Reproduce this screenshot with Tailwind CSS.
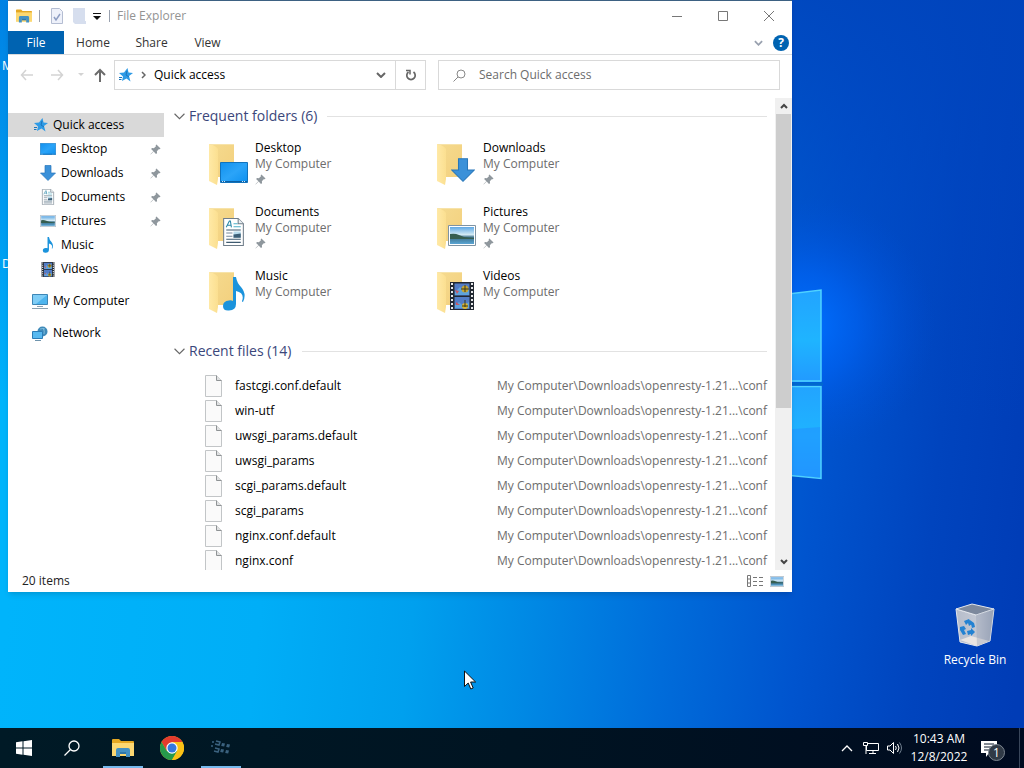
<!DOCTYPE html>
<html lang="en">
<head>
    <meta charset="UTF-8">
    <meta name="viewport" content="width=device-width, initial-scale=1.0">
    <title>File Explorer</title>
    <script src="https://cdn.jsdelivr.net/npm/@tailwindcss/browser@4"></script>
</head>
<body class="relative flex flex-col min-h-screen overflow-hidden bg-[#0048c4] font-['Open_Sans',sans-serif] text-xs text-black">

    <!-- Icon sprite -->
    <svg class="absolute w-0 h-0" aria-hidden="true">
        <defs>
            <linearGradient id="folderFront" x1="0" y1="0" x2="1" y2="0">
                <stop offset="0" stop-color="#ffe9a6"/><stop offset="1" stop-color="#fbdf90"/>
            </linearGradient>
            <linearGradient id="folderBack" x1="0" y1="0" x2="1" y2="1">
                <stop offset="0" stop-color="#f5da8e"/><stop offset="1" stop-color="#f3d07e"/>
            </linearGradient>
            <linearGradient id="screenBlue" x1="0" y1="0" x2="1" y2="1">
                <stop offset="0" stop-color="#1190ee"/><stop offset=".5" stop-color="#2ba4f8"/><stop offset="1" stop-color="#0c90f0"/>
            </linearGradient>
            <linearGradient id="photoSky" x1="0" y1="0" x2="0" y2="1">
                <stop offset="0" stop-color="#5fa8e4"/><stop offset=".45" stop-color="#d4ebf5"/><stop offset=".6" stop-color="#3d7089"/><stop offset="1" stop-color="#5aa5d4"/>
            </linearGradient>
            <linearGradient id="binSide" x1="0" y1="0" x2="1" y2="0">
                <stop offset="0" stop-color="#b6bdcb"/><stop offset=".6" stop-color="#c4c9d4"/><stop offset="1" stop-color="#9ea8bb"/>
            </linearGradient>
        </defs>
        <symbol id="explorer" viewBox="0 0 22 18">
            <path d="M0 1q0-1 1-1h6l2 2h12q1 0 1 1v3H0z" fill="#e5a823"/>
            <path d="M0 4h22v13H0z" fill="#fcd872"/>
            <path d="M4 18v-7q0-2 2-2h10q2 0 2 2v7h-4v-5H8v5z" fill="#4491c4"/>
            <path d="M8 13h6v2H8z" fill="#2f78ab"/>
        </symbol>
        <symbol id="star" viewBox="0 0 14 14">
            <path d="M8.500 0l1 4.500 4.500.5-4 3 1.500 5.500L7.500 10.500 3 13l1-4.500L0 5l5-.5z" fill="#2f9be6"/>
            <path d="M0 9.500h3M0 11.500h2.500M8 3l-1 4 3 2" stroke="#1b74bb" fill="none"/>
        </symbol>
        <symbol id="pin" viewBox="0 0 12 12">
            <path d="M7 0.500L11.500 5l-1 .8-1-.2L7.500 8l.2 2L6.500 11 4 8.300 1 11.300.500 11.500.700 11 3.700 8 1.200 5.500l1-1.200 2 .2L6.500 2.500 6.200 1.300z" fill="#8f979d"/>
        </symbol>
        <symbol id="desktop" viewBox="0 0 28 21">
            <path d="M.5.500h27v20H.500z" fill="url(#screenBlue)" stroke="#1173bd"/>
            <path d="M1 19.500h26" stroke="#0b5fa3"/>
            <path d="M2 19.500h4M22 19.500h4" stroke="#cfe9fb" stroke-dasharray="1 1"/>
        </symbol>
        <symbol id="downarrow" viewBox="0 0 16 16">
            <path d="M5 .5h6V8h4.500L8 15.500.500 8H5z" fill="#3b91d9" stroke="#2877ba" stroke-width=".7"/>
        </symbol>
        <symbol id="document" viewBox="0 0 20 27">
            <path d="M.5.500h14l5 5v21H.500z" fill="#fff" stroke="#6f7d89"/>
            <path d="M14.500.500v5h5" fill="#e8eef2" stroke="#6f7d89"/>
            <path d="M3 9L6 3h1l1 6M4.500 7H8" stroke="#2a87a8" fill="none"/>
            <path d="M10 5.500h4M10 8.500h7" stroke="#4cb1c9"/>
            <path d="M3 11.500h14M3 20.500h14M3 23.500h14" stroke="#3f5b70"/>
            <path d="M3 14.500h6M3 17.500h6" stroke="#75889a"/>
            <path d="M10 13h7v6h-7z" fill="#b8dced"/><path d="M10 16l7-1v4h-7z" fill="#3c5f77"/>
        </symbol>
        <symbol id="picture" viewBox="0 0 28 21">
            <path d="M.5.500h27v20H.500z" fill="#fff" stroke="#7e93a3"/>
            <path d="M2 2h24v17H2z" fill="url(#photoSky)"/>
            <path d="M2 9q5-1 9 1l5 2 10 1v1H2z" fill="#365e50"/>
        </symbol>
        <symbol id="music" viewBox="0 0 22 34">
            <path d="M10 0h3q1 6 5 10 6 7 2 15-1 0-1-1 3-8-6-10v13q0 6-7 6.500Q0 34 0 29q0-5 6-5.500 2-.5 4 .5z" fill="#1b93dc"/>
        </symbol>
        <symbol id="video" viewBox="0 0 24 28">
            <path d="M0 0h24v28H0z" fill="#222831"/>
            <path d="M2 1v26M22 1v26" stroke="#e6e8ea" stroke-width="2" stroke-dasharray="2 2"/>
            <path d="M4.500 1.500h15v12h-15zM4.500 15h15v12h-15z" fill="#527cc6"/>
            <path d="M5 10l5-5 4 4 5-3v7H5zM5 23l4-3 4 4 6-4v6H5z" fill="#5ea3dd"/>
            <circle cx="15" cy="7" r="3.500" fill="#c7a52f"/><path d="M11 7h8M15 3v7" stroke="#39391f"/>
            <circle cx="15" cy="24" r="3" fill="#dcb62f"/><path d="M12 24h6M15 18v7" stroke="#39391f"/>
            <path d="M5 8l4 1-2 3zM6 20l4 3H6z" fill="#c85962"/>
        </symbol>
        <symbol id="computer" viewBox="0 0 16 15">
            <path d="M.5.500h15v10H.500z" fill="#4eb5ee" stroke="#3d86b6"/>
            <path d="M1 1h14L4 10H1z" fill="#7fcdf6"/>
            <path d="M5 12.500h6M0 14.500h16" stroke="#8aa1b1"/>
        </symbol>
        <symbol id="network" viewBox="0 0 16 15">
            <circle cx="10.500" cy="5.500" r="5" fill="#3f8ab9"/>
            <path d="M8 3q3-1 5 0M11 2q2 3 1 6" stroke="#8cc4e2" stroke-width=".8" fill="none"/>
            <path d="M.5 5.500h10v7H.500z" fill="#58b9f0" stroke="#2c7cb6"/>
            <path d="M3 14.500h6" stroke="#6f94ad"/>
        </symbol>
        <symbol id="folder" viewBox="0 0 26 42">
            <path d="M3 1h22v33H8z" fill="url(#folderBack)"/>
            <path d="M0 1h2q6 3 7 5v30L8 42 0 38z" fill="url(#folderFront)"/>
            <path d="M1 1.500h24" stroke="#f7e3a9"/>
        </symbol>
        <symbol id="page" viewBox="0 0 17 22">
            <path d="M.5.500h11l5 5v16H.500z" fill="#fafafa" stroke="#c2c5c7"/>
            <path d="M11.500.500v5h5" fill="#dfe1e2" stroke="#8f9395"/>
        </symbol>
        <symbol id="chevron" viewBox="0 0 10 6">
            <path d="M.5.500L5 5 9.500.500" fill="none" stroke="currentColor"/>
        </symbol>
    </svg>

    <!-- Wallpaper -->
    <svg class="absolute inset-0 w-full h-full" viewBox="0 0 1024 768" preserveAspectRatio="xMaxYMin slice" aria-hidden="true">
        <defs>
            <linearGradient id="sky" gradientUnits="userSpaceOnUse" x1="0" y1="660" x2="1010" y2="760">
                <stop offset="0" stop-color="#00b4fb"/><stop offset=".25" stop-color="#00aef7"/>
                <stop offset=".4" stop-color="#00a0ee"/><stop offset=".52" stop-color="#0088e4"/>
                <stop offset=".65" stop-color="#006cda"/><stop offset=".78" stop-color="#0054ce"/>
                <stop offset=".9" stop-color="#0044be"/><stop offset="1" stop-color="#003cb6"/>
            </linearGradient>
            <linearGradient id="edge" x1="0" y1="0" x2="0" y2="1">
                <stop offset="0" stop-color="#0082e4"/><stop offset="1" stop-color="#00b2fb"/>
            </linearGradient>
            <linearGradient id="shade" x1="0" y1="0" x2="0" y2="1">
                <stop offset="0" stop-color="#0044bc" stop-opacity=".85"/><stop offset="1" stop-color="#0046c4" stop-opacity="0"/>
            </linearGradient>
            <radialGradient id="glow" gradientUnits="userSpaceOnUse" cx="805" cy="325" r="130">
                <stop offset="0" stop-color="#0070ff"/><stop offset=".4" stop-color="#0064f6" stop-opacity=".65"/><stop offset="1" stop-color="#0050d8" stop-opacity="0"/>
            </radialGradient>
            <linearGradient id="pane" x1="0" y1="0" x2="0" y2="1">
                <stop offset="0" stop-color="#22a4ff"/><stop offset=".55" stop-color="#1fb4ff"/><stop offset="1" stop-color="#229aff"/>
            </linearGradient>
        </defs>
        <path d="M0 0h1024v768H0z" fill="url(#sky)"/>
        <path d="M0 0h8v400H0z" fill="url(#edge)"/>
        <path d="M700 0h324v420H700z" fill="url(#shade)"/>
        <path d="M620 130h404v400H620z" fill="url(#glow)"/>
        <path d="M780 295l41-5v92h-41z" fill="url(#pane)"/>
        <path d="M780 386h41v92l-41-4z" fill="url(#pane)"/>
        <path d="M780 430l41-3v51l-41-4z" fill="#2292ff" opacity=".6"/>
        <path d="M780 295l41-5v91h-41M780 386.500h41v92l-41-4" fill="none" stroke="#4fd2ff" stroke-width="1.500"/>
        <path d="M780 384h43" stroke="#0069cd" stroke-width="3"/>
    </svg>

    <!-- Desktop -->
    <main class="relative flex-1">
        <div class="absolute top-[58px] left-0 w-2 pl-[2px] leading-4 overflow-hidden text-white">M</div>
        <div class="absolute top-64 left-0 w-2 pl-[2px] leading-4 overflow-hidden text-white">D</div>

        <a href="#" class="absolute top-[602px] right-3 w-[74px] flex flex-col items-center text-white">
            <svg class="w-10 h-[46px]" viewBox="0 0 40 46" aria-hidden="true">
                <path d="M1 7l20 6 18-6-4 32-13 5-17-4z" fill="url(#binSide)" stroke="#e4e7ec"/>
                <path d="M1 7L17 2l22 5-18 6z" fill="#7d899d" stroke="#e4e7ec"/>
                <path d="M5 38l11-4 18 5-12 5z" fill="#eae5e2"/>
                <path d="M21 13l1 31 13-5L39 7z" fill="#8c98b0" opacity=".35"/>
                <path d="M9 19l5-2 3 5-3 2-1-3-2 2zM5 25l4-1 2 3-2 1 2 4-3 1-3-5zM12 29l4-1v-2l4 4-4 4v-2l-3 1zM15 18l4 3 1 4-3 1z" fill="#2382d2"/>
            </svg>
            <span class="mt-1 leading-4 whitespace-nowrap">Recycle Bin</span>
        </a>

        <section class="absolute top-0 left-2 right-[232px] flex flex-col bg-white border-t border-[#3d6182] shadow-md" aria-label="File Explorer">
            <header class="flex items-center h-[30px] pl-2">
                <svg class="w-4 h-4"><use href="#explorer"/></svg>
                <span class="ml-[7px] w-px h-3 bg-gray-400"></span>
                <button class="ml-[11px]" aria-label="Properties">
                    <svg class="w-3 h-4" viewBox="0 0 12 16"><path d="M.5.500h8l3 3v12H.500z" fill="#eef1fa" stroke="#b4bdd2"/><path d="M3 9l2 3 4-6" fill="none" stroke="#8d9dc2" stroke-width="1.500"/></svg>
                </button>
                <button class="ml-[10px]" aria-label="New folder">
                    <svg class="w-[13px] h-4" viewBox="0 0 13 16"><path d="M0 0h12v13h1v3H2L0 14z" fill="#d6deee"/></svg>
                </button>
                <button class="ml-[7px]" aria-label="Customize Quick Access Toolbar">
                    <svg class="w-2 h-[7px]" viewBox="0 0 8 7"><path d="M0 .5h8" stroke="#111"/><path d="M0 3h8L4 7z" fill="#111"/></svg>
                </button>
                <span class="ml-2 w-px h-3 bg-gray-400"></span>
                <h1 class="ml-[7px] flex-1 text-[#939393]">File Explorer</h1>
                <button class="flex justify-center w-[46px]" aria-label="Minimize"><svg class="w-[10px] h-[10px]" viewBox="0 0 10 10"><path d="M0 5.500h10" stroke="#777"/></svg></button>
                <button class="flex justify-center w-[46px]" aria-label="Maximize"><svg class="w-[10px] h-[10px]" viewBox="0 0 10 10"><path d="M.5.500h9v9h-9z" fill="none" stroke="#777"/></svg></button>
                <button class="flex justify-center w-[46px]" aria-label="Close"><svg class="w-[10px] h-[10px]" viewBox="0 0 10 10"><path d="M0 0l10 10M10 0L0 10" stroke="#777"/></svg></button>
            </header>

            <nav class="flex items-center h-6 border-b border-[#dadbdc] text-[#333]" aria-label="Ribbon">
                <button class="w-14 h-[23px] bg-[#0063b1] text-white">File</button>
                <button class="w-[58px]">Home</button>
                <button class="w-[59px]">Share</button>
                <button class="w-[53px]">View</button>
                <button class="ml-auto text-gray-400" aria-label="Expand the Ribbon"><svg class="w-[9px] h-[6px]" viewBox="0 0 10 6"><path d="M1 1l4 4 4-4" fill="none" stroke="currentColor" stroke-width="2"/></svg></button>
                <button class="ml-[10px] mr-[3px] w-4 h-4 rounded-full bg-[#0063b1] text-white font-bold leading-4" aria-label="Help">?</button>
            </nav>

            <div class="flex items-center h-10 pl-3 pr-3">
                <button aria-label="Back"><svg class="w-[14px] h-3" viewBox="0 0 14 12"><path d="M13 6H2M6 1L1.500 6 6 11" fill="none" stroke="#d3d3d3" stroke-width="1.500"/></svg></button>
                <button class="ml-4" aria-label="Forward"><svg class="w-[14px] h-3" viewBox="0 0 14 12"><path d="M1 6h11M8 1l4.500 5L8 11" fill="none" stroke="#d3d3d3" stroke-width="1.500"/></svg></button>
                <button class="ml-[14px]" aria-label="Recent locations"><svg class="w-[6px] h-1" viewBox="0 0 6 4"><path d="M0 0h6L3 3z" fill="#d3d3d3"/></svg></button>
                <button class="ml-[10px]" aria-label="Up"><svg class="w-3 h-[14px]" viewBox="0 0 12 14"><path d="M6 14V2M1 7l5-5 5 5" fill="none" stroke="#6b6b6b" stroke-width="2"/></svg></button>
                <div class="flex items-center ml-2 h-[30px] w-[312px] border border-[#d9d9d9]">
                    <svg class="ml-1 w-[14px] h-[14px]"><use href="#star"/></svg>
                    <svg class="ml-2 w-[5px] h-2" viewBox="0 0 5 8"><path d="M1 1l3 3-3 3" fill="none" stroke="#666" stroke-width="1.500"/></svg>
                    <button class="ml-2">Quick access</button>
                    <button class="ml-auto mr-[9px]" aria-label="Previous locations"><svg class="w-[10px] h-[6px]" viewBox="0 0 10 6"><path d="M1 1l4 4 4-4" fill="none" stroke="#666" stroke-width="2"/></svg></button>
                    <button class="flex items-center justify-center w-[30px] h-full border-l border-[#d9d9d9]" aria-label="Refresh">
                        <svg class="w-3 h-3" viewBox="0 0 12 12"><path d="M8.500 3a4.200 4.200 0 1 1-5 0" fill="none" stroke="#666" stroke-width="1.700"/><path d="M1 1.500h4v4" fill="none" stroke="#666" stroke-width="1.500"/></svg>
                    </button>
                </div>
                <label class="flex items-center flex-1 ml-3 h-[30px] border border-[#d9d9d9]">
                    <svg class="ml-[14px] w-[13px] h-[13px]" viewBox="0 0 13 13" aria-hidden="true"><circle cx="8" cy="5" r="4" fill="none" stroke="#888"/><path d="M5 8L.500 12.500" stroke="#888"/></svg>
                    <input type="text" aria-label="Search Quick access" placeholder="Search Quick access" class="ml-[13px] flex-1 min-w-0 outline-none placeholder:text-[#6d6d6d]">
                </label>
            </div>

            <div class="flex h-[472px] mt-[3px]">
                <nav class="w-[156px] shrink-0 pt-[15px]" aria-label="Folders">
                    <a href="#" class="flex items-center h-6 pl-[26px] gap-[5px] bg-[#d9d9d9]"><svg class="w-[14px] h-[14px]"><use href="#star"/></svg>Quick access</a>
                    <a href="#" class="flex items-center h-6 pl-8 pr-[3px] gap-[5px]"><svg class="w-4 h-3"><use href="#desktop"/></svg><span class="flex-1">Desktop</span><svg class="w-[11px] h-[11px]"><use href="#pin"/></svg></a>
                    <a href="#" class="flex items-center h-6 pl-8 pr-[3px] gap-[5px]"><svg class="w-4 h-4"><use href="#downarrow"/></svg><span class="flex-1">Downloads</span><svg class="w-[11px] h-[11px]"><use href="#pin"/></svg></a>
                    <a href="#" class="flex items-center h-6 pl-8 pr-[3px] gap-[5px]"><svg class="w-4 h-4"><use href="#document"/></svg><span class="flex-1">Documents</span><svg class="w-[11px] h-[11px]"><use href="#pin"/></svg></a>
                    <a href="#" class="flex items-center h-6 pl-8 pr-[3px] gap-[5px]"><svg class="w-4 h-3"><use href="#picture"/></svg><span class="flex-1">Pictures</span><svg class="w-[11px] h-[11px]"><use href="#pin"/></svg></a>
                    <a href="#" class="flex items-center h-6 pl-8 gap-[5px]"><svg class="w-4 h-4"><use href="#music"/></svg>Music</a>
                    <a href="#" class="flex items-center h-6 pl-8 gap-[5px]"><svg class="w-4 h-[15px]"><use href="#video"/></svg>Videos</a>
                    <a href="#" class="flex items-center h-6 pl-6 gap-[5px] mt-2"><svg class="w-4 h-[15px]"><use href="#computer"/></svg>My Computer</a>
                    <a href="#" class="flex items-center h-6 pl-6 gap-[5px] mt-2"><svg class="w-4 h-[15px]"><use href="#network"/></svg>Network</a>
                </nav>

                <div class="flex-1 min-w-0 pl-[10px] pr-2 pt-2 overflow-hidden">
                    <div class="flex items-center h-5">
                        <svg class="w-[11px] h-[7px] text-[#666]"><use href="#chevron"/></svg>
                        <h2 class="ml-1 text-sm text-[#3b477b]">Frequent folders (6)</h2>
                        <span class="flex-1 ml-[10px] h-px bg-[#e2e2e2]"></span>
                    </div>
                    <div id="folders" class="grid grid-cols-[228px_228px] auto-rows-[64px] pl-[35px] pt-[14px]"></div>

                    <div class="flex items-center h-5 mt-[9px]">
                        <svg class="w-[11px] h-[7px] text-[#666]"><use href="#chevron"/></svg>
                        <h2 class="ml-1 text-sm text-[#3b477b]">Recent files (14)</h2>
                        <span class="flex-1 ml-[10px] h-px bg-[#e2e2e2]"></span>
                    </div>
                    <table class="w-full mt-3">
                        <tbody id="files"></tbody>
                    </table>
                </div>

                <div class="flex flex-col w-[17px] shrink-0 bg-[#f0f0f0]">
                    <button class="flex items-center justify-center h-4" aria-label="Scroll up"><svg class="w-2 h-[6px]" viewBox="0 0 8 6"><path d="M1 5l3-3 3 3" fill="none" stroke="#444" stroke-width="2"/></svg></button>
                    <div class="mx-px h-[294px] bg-[#cdcdcd]"></div>
                    <button class="flex items-center justify-center mt-auto h-[17px]" aria-label="Scroll down"><svg class="w-2 h-[6px]" viewBox="0 0 8 6"><path d="M1 1l3 3 3-3" fill="none" stroke="#444" stroke-width="2"/></svg></button>
                </div>
            </div>

            <footer class="flex items-center h-[22px] pl-[14px] pr-2 text-[#222]">
                <span class="flex-1">20 items</span>
                <button aria-label="Details view"><svg class="w-4 h-3" viewBox="0 0 16 12"><path d="M.5.500h3v11h-3zM.5 4h3M.5 8h3" fill="none" stroke="#777"/><path d="M6 2.500h4M12 2.500h4M6 6.500h4M12 6.500h4M6 10.500h4M12 10.500h4" stroke="#777"/></svg></button>
                <button class="ml-[7px]" aria-label="Large icons view"><svg class="w-[14px] h-[11px]"><use href="#picture"/></svg></button>
            </footer>
        </section>

        <!-- Mouse pointer -->
        <svg class="absolute left-[464px] top-[670px] w-[13px] h-[20px]" viewBox="0 0 13 20" aria-hidden="true">
            <path d="M.5 1v15.500l3.700-3.500 2.600 6 2.400-1-2.600-6h5z" fill="#fff" stroke="#111"/>
        </svg>
    </main>

    <!-- Taskbar -->
    <footer class="relative flex items-center h-10 bg-linear-to-r from-[#001a26] via-[#001422] to-[#000b20] text-white">
        <button class="flex items-center justify-center w-12 h-full" aria-label="Start">
            <svg class="w-4 h-4" viewBox="0 0 16 16"><path d="M0 2.300L6.500 1.300V7.500H0zM7.500 1.200L16 0v7.500H7.500zM0 8.500h6.500v6.200L0 13.700zM7.500 8.500H16V16l-8.500-1.200z" fill="#fff"/></svg>
        </button>
        <button class="flex items-center justify-center w-12 h-full" aria-label="Search">
            <svg class="w-4 h-4" viewBox="0 0 16 16"><circle cx="10" cy="6" r="5" fill="none" stroke="#fff" stroke-width="1.300"/><path d="M6.500 9.500L.5 15.500" stroke="#fff" stroke-width="1.300"/></svg>
        </button>
        <button class="flex items-center justify-center ml-[7px] w-10 h-full pt-px border-b-2 border-[#76b9ed]" aria-label="File Explorer">
            <svg class="w-[22px] h-[18px]"><use href="#explorer"/></svg>
        </button>
        <button class="flex items-center justify-center ml-[9px] w-10 h-full" aria-label="Chrome">
            <svg class="w-6 h-6" viewBox="0 0 24 24">
                <circle cx="12" cy="12" r="12" fill="#fbc116"/>
                <path d="M1.600 6A12 12 0 0 1 22.400 6H12L6.800 15z" fill="#e33b2e"/>
                <path d="M1.600 6A12 12 0 0 0 12 24L17.200 15 6.800 15z" fill="#279a4b"/>
                <path d="M22.400 6H12l5.200 9L12 24A12 12 0 0 0 22.400 6z" fill="#fbc116"/>
                <circle cx="12" cy="12" r="5.700" fill="#fff"/><circle cx="12" cy="12" r="4.500" fill="#3578e0"/>
            </svg>
        </button>
        <button class="flex items-center justify-center ml-[9px] w-10 h-full border-b-2 border-[#76b9ed]" aria-label="Running application">
            <svg class="w-5 h-4" viewBox="0 0 20 16"><path d="M1 3h2M5 2l4 1-1 3-4-1M0 7h2M4 9l4 1-1 3-4-1" fill="none" stroke="#3b627f" stroke-width="1.500"/><path d="M11 4l3 .5-.8 3-3-.5zM16 5l3 .5-.8 3-3-.5zM10 10l3 .5-.8 3-3-.5zM15 11l3 .5-.8 3-3-.5z" fill="#3b627f"/></svg>
        </button>

        <div class="flex items-center ml-auto h-full border-r border-[#39465a] mr-1">
            <button aria-label="Show hidden icons"><svg class="w-3 h-2" viewBox="0 0 12 8"><path d="M1 7l5-5 5 5" fill="none" stroke="#fff" stroke-width="1.300"/></svg></button>
            <button class="ml-[10px]" aria-label="Network"><svg class="w-4 h-[14px]" viewBox="0 0 16 14"><path d="M5 2.500h10.500v7H3.500V5M10 9.500v3M6 12.500h7M.5 1.500h4v3h-4zM3 5v8" fill="none" stroke="#fff"/></svg></button>
            <button class="ml-2" aria-label="Volume"><svg class="w-4 h-[14px]" viewBox="0 0 16 14"><path d="M.5 5H3l3.500-3.500v11L3 9H.500zM8.500 5q1.500 2 0 4M10.500 3q3 4 0 8" fill="none" stroke="#fff"/><path d="M12.500 1.500q4 5.500 0 11" fill="none" stroke="#71808f"/></svg></button>
            <div class="ml-[6px] w-[60px] text-center leading-[18px] whitespace-nowrap"><p>10:43 AM</p><p>12/8/2022</p></div>
            <button class="relative ml-[11px] mr-[15px] w-6 h-6" aria-label="Notifications">
                <svg class="w-[18px] h-[18px]" viewBox="0 0 18 18"><path d="M1 2h16v12H9l-3 4v-4H1z" fill="#fff"/><path d="M4 5h10M4 8h10M4 11h6" stroke="#08172a"/></svg>
                <span class="absolute top-2 left-2 w-[17px] h-[17px] rounded-full border border-[#7d8791] bg-[#303a46] leading-[15px]">1</span>
            </button>
        </div>
    </footer>

    <script>
        const folders = [
            { name: 'Desktop', icon: 'desktop', size: 'left-[11px] top-[22px] w-7 h-[21px]', pinned: true },
            { name: 'Downloads', icon: 'downarrow', size: 'left-[14px] top-[17px] w-6 h-[26px]', pinned: true },
            { name: 'Documents', icon: 'document', size: 'left-[14px] top-[14px] w-[21px] h-7', pinned: true },
            { name: 'Pictures', icon: 'picture', size: 'left-[11px] top-[21px] w-7 h-[21px]', pinned: true },
            { name: 'Music', icon: 'music', size: 'left-[14px] top-[9px] w-[22px] h-[34px]', pinned: false },
            { name: 'Videos', icon: 'video', size: 'left-[13px] top-[14px] w-6 h-7', pinned: false }
        ];
        document.getElementById('folders').innerHTML = folders.map(f => `
            <a href="#" class="flex">
                <span class="relative w-[46px] pt-[3px]">
                    <svg class="w-[26px] h-[42px]"><use href="#folder"/></svg>
                    <svg class="absolute ${f.size}"><use href="#${f.icon}"/></svg>
                </span>
                <span class="leading-4">
                    <span class="block">${f.name}</span>
                    <span class="block text-[#6d6d6d]">My Computer</span>
                    ${f.pinned ? '<svg class="w-[11px] h-[11px] mt-[2px]"><use href="#pin"/></svg>' : ''}
                </span>
            </a>`).join('');

        const files = [
            'fastcgi.conf.default', 'win-utf', 'uwsgi_params.default', 'uwsgi_params',
            'scgi_params.default', 'scgi_params', 'nginx.conf.default', 'nginx.conf'
        ];
        document.getElementById('files').innerHTML = files.map(name => `
            <tr class="h-[25px]">
                <td class="w-[61px] pl-[31px]"><svg class="w-[17px] h-[22px]"><use href="#page"/></svg></td>
                <td>${name}</td>
                <td class="text-right text-[#6d6d6d]">My Computer\\Downloads\\openresty-1.21...\\conf</td>
            </tr>`).join('');
    </script>
</body>
</html>
